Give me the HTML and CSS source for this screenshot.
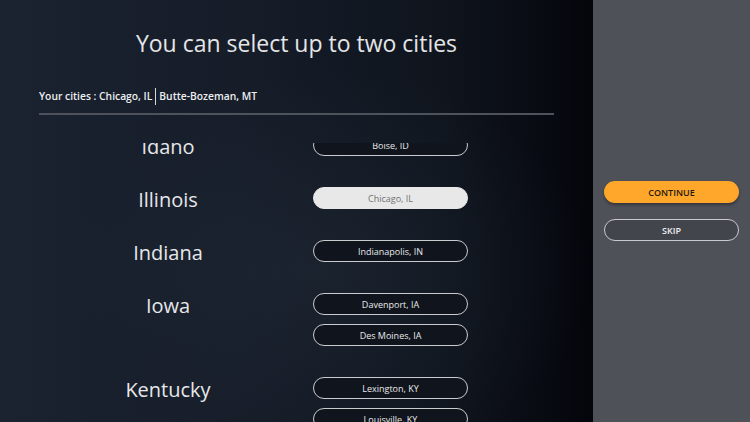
FILE: index.html
```html
<!DOCTYPE html>
<html lang="en">
<head>
    <meta charset="UTF-8">
    <meta name="viewport" content="width=device-width, initial-scale=1.0">
    <title>Select Cities</title>
    <link rel="stylesheet" href="styles.css">
</head>
<body>
    <main class="picker">
        <h1 class="picker-title">You can select up to two cities</h1>

        <div class="chosen">
            <span>Your cities : Chicago, IL</span>
            <span class="chosen-sep"></span>
            <span>Butte-Bozeman, MT</span>
        </div>
        <hr class="divider">

        <div class="state-list">
            <div class="state-scroll">
                <div class="state">
                    <div class="state-name">Idaho</div>
                    <div class="cities">
                        <button class="city">Boise, ID</button>
                    </div>
                </div>
                <div class="state">
                    <div class="state-name">Illinois</div>
                    <div class="cities">
                        <button class="city selected">Chicago, IL</button>
                    </div>
                </div>
                <div class="state">
                    <div class="state-name">Indiana</div>
                    <div class="cities">
                        <button class="city">Indianapolis, IN</button>
                    </div>
                </div>
                <div class="state">
                    <div class="state-name">Iowa</div>
                    <div class="cities">
                        <button class="city">Davenport, IA</button>
                        <button class="city">Des Moines, IA</button>
                    </div>
                </div>
                <div class="state">
                    <div class="state-name">Kentucky</div>
                    <div class="cities">
                        <button class="city">Lexington, KY</button>
                        <button class="city">Louisville, KY</button>
                    </div>
                </div>
            </div>
        </div>
    </main>

    <aside class="actions">
        <button class="btn btn-continue">CONTINUE</button>
        <button class="btn btn-skip">SKIP</button>
    </aside>
</body>
</html>
```

FILE: styles.css
```css
body {
    margin: 0;
    width: 750px;
    height: 422px;
    overflow: hidden;
    display: flex;
    font-family: "Open Sans", "Noto Sans", sans-serif;
    color: #e2e3e5;
}

.picker {
    width: 593px;
    height: 422px;
    display: flex;
    flex-direction: column;
    background:
        radial-gradient(ellipse 260px 200px at 330px 270px, rgba(40, 52, 66, 0.35), rgba(40, 52, 66, 0)),
        linear-gradient(to right, #1b2230 0%, #161d29 40%, #0f141d 75%, #070910 94%, #04050b 100%);
}

.picker-title {
    margin: 26px 0 0;
    text-align: center;
    font-size: 23px;
    font-weight: 400;
    line-height: 34px;
    color: #e4e5e7;
}

.chosen {
    margin: 27px 39px 0;
    display: flex;
    align-items: center;
    gap: 3px;
    font-size: 10.3px;
    font-weight: 600;
    line-height: 18px;
    color: #eceef0;
}

.chosen-sep {
    width: 1px;
    height: 17px;
    background: #d8d8d8;
}

.divider {
    margin: 8px 39px 0;
    border: none;
    height: 2px;
    background: #4d525b;
}

.state-list {
    flex: 1;
    margin-top: 28px;
    overflow: hidden;
}

.state-scroll {
    margin-top: -9px;
    display: flex;
    flex-direction: column;
    gap: 31px;
}

.state {
    display: grid;
    grid-template-columns: 258px 155px;
    column-gap: 16px;
    padding-left: 39px;
}

/* label sits a touch below the first button's middle */
.state-name {
    height: 22px;
    text-align: center;
    font-size: 20px;
    line-height: 26px;
    color: #e6e7e9;
}

.cities {
    display: flex;
    flex-direction: column;
    gap: 9px;
}

.city {
    height: 22px;
    padding: 0;
    border: 1px solid #c9cbce;
    border-radius: 11px;
    background: #10141c;
    color: #e8e9eb;
    font-family: inherit;
    font-size: 9px;
    font-weight: 500;
}

.city.selected {
    background: #e8e8e9;
    border-color: #e8e8e9;
    color: #707275;
}

.actions {
    flex: 1;
    display: flex;
    flex-direction: column;
    justify-content: center;
    gap: 16px;
    padding: 0 11px;
    background: #4f5159;
}

.btn {
    height: 22px;
    padding: 0;
    border-radius: 11px;
    font-family: inherit;
    font-size: 9px;
    font-weight: 600;
    cursor: pointer;
}

.btn-continue {
    border: none;
    background: #fea72a;
    color: #1e1a12;
    box-shadow: 0 2px 3px rgba(0, 0, 0, 0.35);
}

.btn-skip {
    border: 1px solid #c9cacd;
    background: #43454c;
    color: #eeeff1;
}
```
